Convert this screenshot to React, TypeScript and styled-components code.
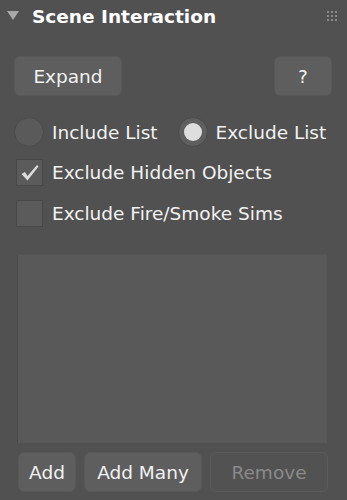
import React, { useState } from 'react';
import styled, { createGlobalStyle } from 'styled-components';

const GlobalStyle = createGlobalStyle`
  html, body {
    margin: 0;
    padding: 0;
    background: #515151;
  }
  body {
    font-family: "DejaVu Sans", "Liberation Sans", sans-serif;
    color: #f2f2f2;
  }
`;

const CheckMark = () => (
  <svg width="25" height="25" viewBox="0 0 25 25">
    <path d="M4.5 14 L8 12 L10.5 16 L20 5 L21.5 6.5 L10.5 20.5 Z" fill="#dcdcdc" />
  </svg>
);

const App: React.FC = () => {
  const [mode, setMode] = useState<'include' | 'exclude'>('exclude');
  const [hidden, setHidden] = useState(true);
  const [fire, setFire] = useState(false);

  return (
    <>
      <GlobalStyle />
      <Panel>
        <Header>
          <Triangle />
          <Title>Scene Interaction</Title>
          <Grip>
            {Array.from({ length: 9 }).map((_, i) => (
              <GripDot key={i} />
            ))}
          </Grip>
        </Header>

        <ToolRow>
          <Button $width={108}>Expand</Button>
          <Button $width={58}>?</Button>
        </ToolRow>

        <RadioRow>
          <RadioLabel onClick={() => setMode('include')}>
            <Radio $checked={mode === 'include'} />
            Include List
          </RadioLabel>
          <RadioLabel onClick={() => setMode('exclude')}>
            <Radio $checked={mode === 'exclude'} />
            Exclude List
          </RadioLabel>
        </RadioRow>

        <CheckRow $top={12} onClick={() => setHidden(!hidden)}>
          <CheckBox>{hidden && <CheckMark />}</CheckBox>
          Exclude Hidden Objects
        </CheckRow>

        <CheckRow $top={14} onClick={() => setFire(!fire)}>
          <CheckBox>{fire && <CheckMark />}</CheckBox>
          Exclude Fire/Smoke Sims
        </CheckRow>

        <ListBox />

        <BottomRow>
          <Button $width={58}>Add</Button>
          <Button $width={118}>Add Many</Button>
          <Button $width={118} disabled>
            Remove
          </Button>
        </BottomRow>
      </Panel>
    </>
  );
};

const Panel = styled.div`
  width: 347px;
  height: 500px;
  display: flex;
  flex-direction: column;
  box-sizing: border-box;
`;

const Header = styled.div`
  height: 34px;
  display: flex;
  align-items: center;
  padding: 0 10px 0 7px;
`;

const Triangle = styled.div`
  width: 0;
  height: 0;
  border-left: 6.5px solid transparent;
  border-right: 6.5px solid transparent;
  border-top: 9px solid #a8a8a8;
  margin-right: 13px;
  margin-top: -3px;
`;

const Title = styled.div`
  font-weight: bold;
  font-size: 18.5px;
  color: #ffffff;
  flex: 1;
  margin-top: -1px;
`;

const Grip = styled.div`
  display: grid;
  grid-template-columns: repeat(3, 2px);
  grid-gap: 2px;
  margin-top: -3px;
`;

const GripDot = styled.div`
  width: 2px;
  height: 2px;
  background: #8c8c8c;
`;

const ToolRow = styled.div`
  margin-top: 22px;
  display: flex;
  justify-content: space-between;
  padding: 0 15px 0 14px;
`;

const Button = styled.button<{ $width: number }>`
  width: ${p => p.$width}px;
  height: 40px;
  box-sizing: border-box;
  border-radius: 6px;
  border: 1px solid #585858;
  background: #5e5e5e;
  color: #f2f2f2;
  font-family: "DejaVu Sans", "Liberation Sans", sans-serif;
  font-size: 18.5px;
  padding: 0;
  cursor: pointer;

  &:disabled {
    background: #525252;
    border-color: #5c5c5c;
    color: #8a8a8a;
    cursor: default;
  }
`;

const RadioRow = styled.div`
  margin-top: 21px;
  height: 30px;
  display: flex;
  align-items: center;
  padding-left: 14px;
  gap: 20px;
`;

const RadioLabel = styled.label`
  display: flex;
  align-items: center;
  gap: 8px;
  font-size: 18.5px;
  cursor: pointer;
`;

const Radio = styled.span<{ $checked: boolean }>`
  width: 30px;
  height: 30px;
  box-sizing: border-box;
  border-radius: 50%;
  border: 1px solid #4a4a4a;
  background: ${p => (p.$checked ? '#5f5f5f' : '#5a5a5a')};
  display: flex;
  align-items: center;
  justify-content: center;

  &::after {
    content: '';
    display: ${p => (p.$checked ? 'block' : 'none')};
    width: 18px;
    height: 18px;
    border-radius: 50%;
    background: #dedede;
  }
`;

const CheckRow = styled.label<{ $top: number }>`
  margin-top: ${p => p.$top}px;
  height: 27px;
  display: flex;
  align-items: center;
  padding-left: 16px;
  gap: 9px;
  font-size: 18.5px;
  cursor: pointer;
`;

const CheckBox = styled.span`
  width: 27px;
  height: 27px;
  box-sizing: border-box;
  border: 1px solid #484848;
  background: #5b5b5b;
  display: flex;
  align-items: center;
  justify-content: center;
`;

const ListBox = styled.div`
  margin: 27px 20px 0 17px;
  height: 189px;
  background: #595959;
  border-left: 1px solid #4a4a4a;
  border-top: 1px solid #555555;
  box-sizing: border-box;
`;

const BottomRow = styled.div`
  margin-top: 9px;
  display: flex;
  gap: 8px;
  padding-left: 18px;
`;

export default App;
